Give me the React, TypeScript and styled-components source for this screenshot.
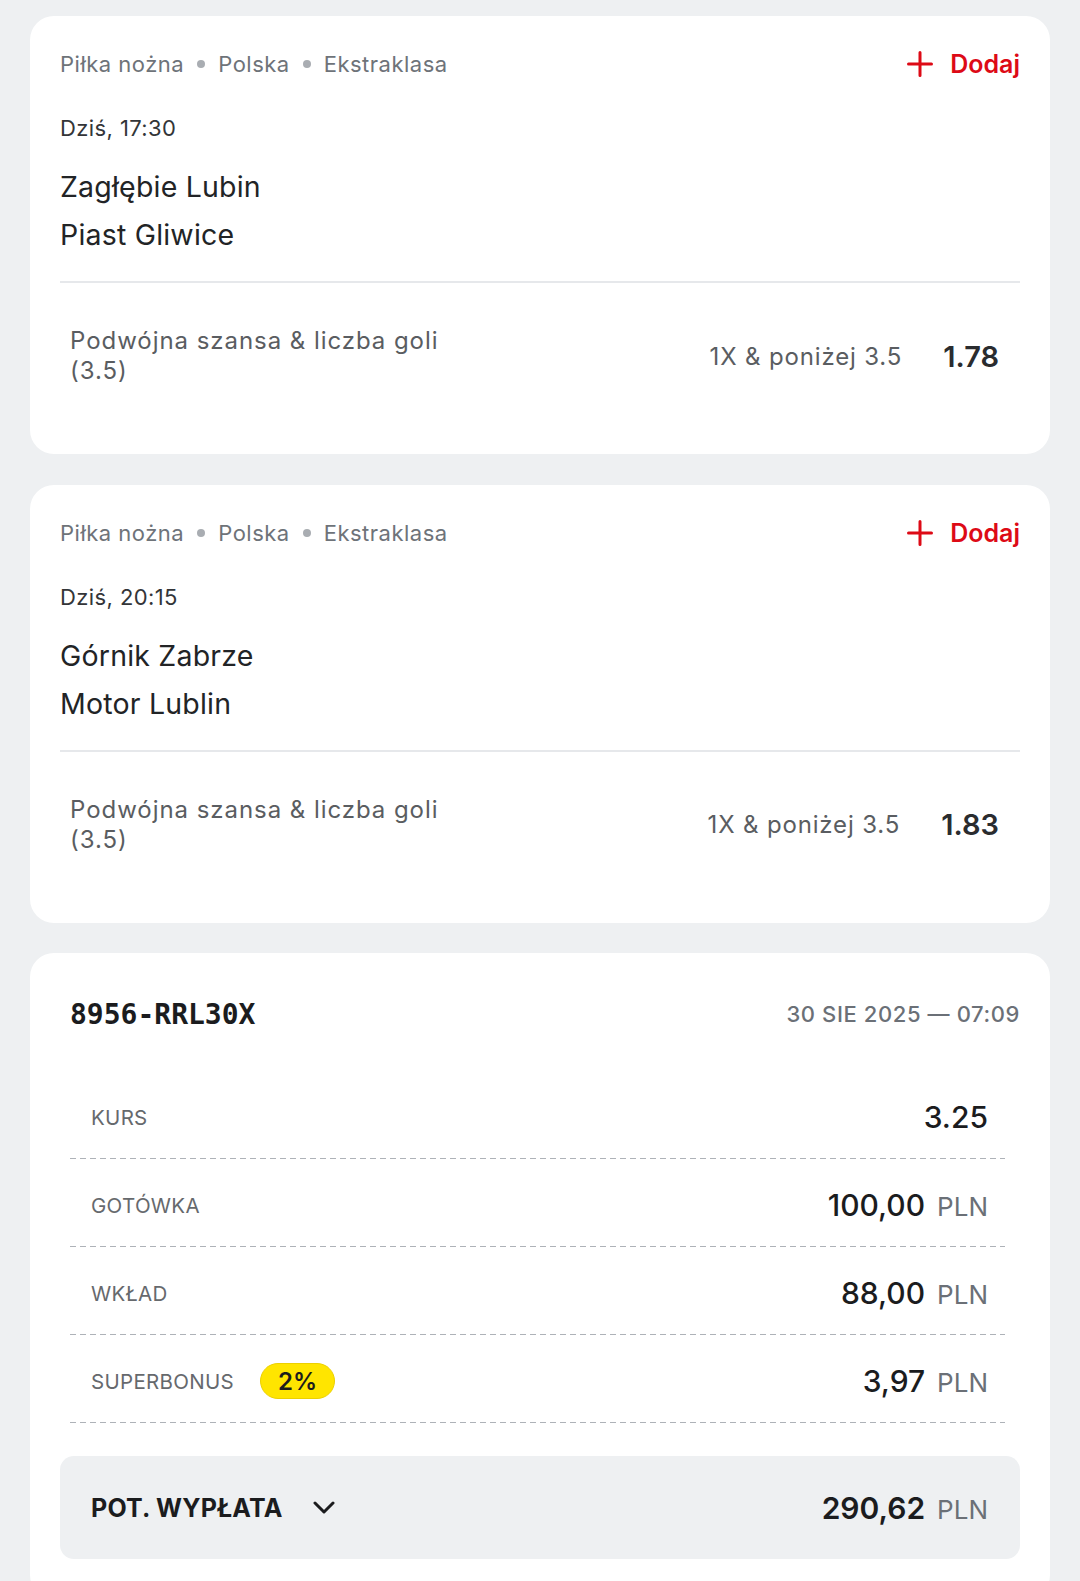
import React from "react";
import styled, { createGlobalStyle } from "styled-components";

const GlobalStyle = createGlobalStyle`
  html, body { margin: 0; padding: 0; background: #eef0f2; }
  body { font-family: Inter, "Noto Sans", "Liberation Sans", sans-serif; -webkit-font-smoothing: antialiased; }
  * { box-sizing: border-box; }
`;

const Page = styled.div`
  display: flex;
  flex-direction: column;
  gap: 30.5px;
  padding: 16px 30px 0;
`;

const Card = styled.section`
  background: #ffffff;
  border-radius: 24px;
  padding: 30px 30px 30px;
`;

const TicketCard = styled(Card)`
  padding-top: 43px;
  padding-bottom: 40px;
`;

const TopRow = styled.div`
  display: flex;
  align-items: center;
  justify-content: space-between;
  height: 36px;
`;

const Crumbs = styled.div`
  display: flex;
  align-items: center;
  font-size: 22px;
  letter-spacing: 0.5px;
  color: #6e7379;
`;

const Dot = styled.span`
  width: 8px;
  height: 8px;
  border-radius: 50%;
  background: #a9adb2;
  margin: 0 13px;
`;

const AddButton = styled.button`
  display: flex;
  align-items: center;
  gap: 17px;
  border: 0;
  background: none;
  padding: 0;
  color: #dd0a16;
  font-family: inherit;
  font-size: 25px;
  font-weight: 600;
  cursor: pointer;
`;

const DateText = styled.div`
  margin-top: 32px;
  font-size: 22px;
  letter-spacing: 0.4px;
  line-height: 28px;
  color: #333538;
`;

const Teams = styled.div`
  margin-top: 21px;
  display: flex;
  flex-direction: column;
`;

const Team = styled.div`
  font-size: 28.5px;
  letter-spacing: 0.2px;
  line-height: 48px;
  color: #222426;
`;

const Divider = styled.hr`
  margin: 22px 0 0;
  border: 0;
  height: 2px;
  background: #e6e8eb;
`;

const Market = styled.div`
  margin-top: 43px;
  padding: 0 21px 38px 10px;
  display: flex;
  align-items: center;
  justify-content: space-between;
`;

const MarketName = styled.div`
  max-width: 420px;
  font-size: 24px;
  letter-spacing: 0.95px;
  line-height: 30px;
  color: #5a5d61;
`;

const Pick = styled.div`
  display: flex;
  align-items: center;
  gap: 41px;
`;

const Selection = styled.span`
  font-size: 24px;
  letter-spacing: 0.85px;
  color: #5a5d61;
`;

const Odds = styled.span`
  font-size: 29px;
  font-weight: 600;
  color: #2a2c2f;
`;

const TicketHead = styled.div`
  display: flex;
  align-items: center;
  justify-content: space-between;
  height: 36px;
  padding-left: 10px;
`;

const TicketId = styled.span`
  font-family: "DejaVu Sans Mono", "Liberation Mono", monospace;
  font-weight: 700;
  font-size: 28px;
  color: #1b1c1e;
`;

const TicketDate = styled.span`
  font-size: 22px;
  font-weight: 500;
  letter-spacing: 0.6px;
  color: #6b7077;
`;

const Rows = styled.div`
  margin: 39px 15px 0 10px;
  display: flex;
  flex-direction: column;
`;

const Row = styled.div`
  height: 88px;
  padding: 6px 17px 2px 21px;
  display: flex;
  align-items: center;
  justify-content: space-between;
  background-image: repeating-linear-gradient(to right, #aeb2b8 0 6px, transparent 6px 10px);
  background-size: 100% 1.5px;
  background-position: left bottom;
  background-repeat: no-repeat;
`;

const LabelGroup = styled.div`
  display: flex;
  align-items: center;
  gap: 26px;
`;

const Label = styled.span`
  font-size: 20.5px;
  letter-spacing: 0.3px;
  color: #66696d;
  text-transform: uppercase;
`;

const Badge = styled.span`
  display: inline-flex;
  align-items: center;
  justify-content: center;
  width: 75px;
  height: 36px;
  border-radius: 18px;
  background: #ffe500;
  border: 1px solid #ecd000;
  font-size: 24px;
  font-weight: 600;
  color: #1c1c1c;
`;

const Amount = styled.span<{ $strong?: boolean }>`
  display: flex;
  align-items: baseline;
  gap: 12px;
  font-size: 30px;
  font-weight: ${(p) => (p.$strong ? 600 : 500)};
  color: #1b1c1e;
`;

const Currency = styled.span`
  font-size: 26px;
  font-weight: 400;
  color: #6b7077;
`;

const Payout = styled.div`
  margin-top: 33px;
  height: 103px;
  border-radius: 14px;
  background: #eef0f2;
  padding: 0 32px 0 31px;
  display: flex;
  align-items: center;
  justify-content: space-between;
`;

const PayoutLabel = styled.div`
  display: flex;
  align-items: center;
  gap: 30px;
  font-size: 25px;
  font-weight: 700;
  letter-spacing: 0.2px;
  color: #1b1c1e;
`;

const PlusIcon = () => (
  <svg width="26" height="26" viewBox="0 0 26 26" aria-hidden>
    <path d="M13 1.5v23M1.5 13h23" stroke="#dd0a16" strokeWidth="3" strokeLinecap="round" fill="none" />
  </svg>
);

const ChevronIcon = () => (
  <svg width="22" height="13" viewBox="0 0 22 13" aria-hidden>
    <path d="M2 2l9 9 9-9" stroke="#1b1c1e" strokeWidth="3" strokeLinecap="round" strokeLinejoin="round" fill="none" />
  </svg>
);

type Match = { time: string; home: string; away: string; odds: string };

const matches: Match[] = [
  { time: "Dziś, 17:30", home: "Zagłębie Lubin", away: "Piast Gliwice", odds: "1.78" },
  { time: "Dziś, 20:15", home: "Górnik Zabrze", away: "Motor Lublin", odds: "1.83" },
];

const MatchCard = ({ m }: { m: Match }) => (
  <Card>
    <TopRow>
      <Crumbs>
        <span>Piłka nożna</span>
        <Dot />
        <span>Polska</span>
        <Dot />
        <span>Ekstraklasa</span>
      </Crumbs>
      <AddButton>
        <PlusIcon />
        Dodaj
      </AddButton>
    </TopRow>
    <DateText>{m.time}</DateText>
    <Teams>
      <Team>{m.home}</Team>
      <Team>{m.away}</Team>
    </Teams>
    <Divider />
    <Market>
      <MarketName>Podwójna szansa &amp; liczba goli (3.5)</MarketName>
      <Pick>
        <Selection>1X &amp; poniżej 3.5</Selection>
        <Odds>{m.odds}</Odds>
      </Pick>
    </Market>
  </Card>
);

export default function App() {
  return (
    <>
      <GlobalStyle />
      <Page>
        {matches.map((m) => (
          <MatchCard key={m.home} m={m} />
        ))}
        <TicketCard>
          <TicketHead>
            <TicketId>8956-RRL30X</TicketId>
            <TicketDate>30 SIE 2025 — 07:09</TicketDate>
          </TicketHead>
          <Rows>
            <Row>
              <Label>Kurs</Label>
              <Amount>3.25</Amount>
            </Row>
            <Row>
              <Label>Gotówka</Label>
              <Amount>
                100,00<Currency>PLN</Currency>
              </Amount>
            </Row>
            <Row>
              <Label>Wkład</Label>
              <Amount>
                88,00<Currency>PLN</Currency>
              </Amount>
            </Row>
            <Row>
              <LabelGroup>
                <Label>Superbonus</Label>
                <Badge>2%</Badge>
              </LabelGroup>
              <Amount>
                3,97<Currency>PLN</Currency>
              </Amount>
            </Row>
          </Rows>
          <Payout>
            <PayoutLabel>
              POT. WYPŁATA
              <ChevronIcon />
            </PayoutLabel>
            <Amount $strong>
              290,62<Currency>PLN</Currency>
            </Amount>
          </Payout>
        </TicketCard>
      </Page>
    </>
  );
}
